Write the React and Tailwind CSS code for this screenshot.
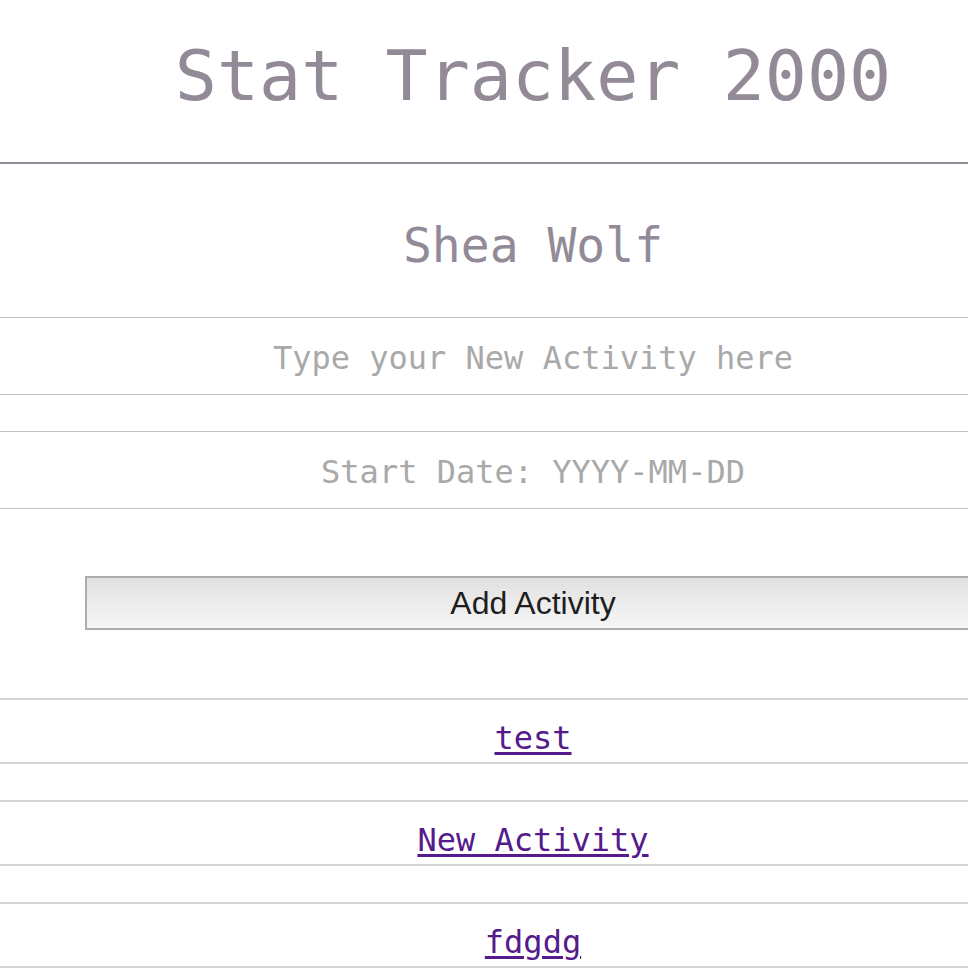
import React from 'react';

const mono = "font-['DejaVu_Sans_Mono','Liberation_Mono',monospace]";

const activities = ['test', 'New Activity', 'fdgdg'];

export default function App() {
    return (
        <div className="w-full overflow-hidden bg-white">
            <div className={`w-[1066px] ${mono}`}>
                {/* Header */}
                <header className="h-[164px] pt-[41px] border-b-2 border-[#928a97] text-center">
                    <h1 className="text-[70px] leading-none text-[#928a97]">Stat Tracker 2000</h1>
                </header>

                {/* User */}
                <h2 className="pt-[57px] text-[48px] leading-none text-center text-[#928a97]">Shea Wolf</h2>

                {/* Form */}
                <form className="mt-[48px]" onSubmit={(e) => e.preventDefault()}>
                    <input
                        type="text"
                        placeholder="Type your New Activity here"
                        className={`block w-full h-[78px] pt-[3px] border-y border-[#c2c2c2] text-center text-[32px] text-[#333] placeholder:text-[#a9a9a9] outline-none ${mono}`}
                    />
                    <input
                        type="text"
                        placeholder="Start Date: YYYY-MM-DD"
                        className={`block w-full h-[78px] mt-[36px] pt-[3px] border-y border-[#c2c2c2] text-center text-[32px] text-[#333] placeholder:text-[#a9a9a9] outline-none ${mono}`}
                    />
                    <button
                        type="submit"
                        className="block mx-auto mt-[67px] w-[896px] h-[54px] border-2 border-[#adadad] bg-gradient-to-b from-[#e1e1e1] to-[#f6f6f6] text-[32px] leading-none text-[#1e1e1e] font-['Liberation_Sans',Arial,sans-serif]"
                    >
                        Add Activity
                    </button>
                </form>

                {/* Activity list */}
                <ul className="mt-[68px] flex flex-col gap-[36px]">
                    {activities.map((name) => (
                        <li key={name} className="h-[66px] pt-[14px] border-y-2 border-[#d3d3d3] flex items-center justify-center">
                            <a href="#" className="text-[32px] leading-none text-[#551a8b] underline underline-offset-[3px]">
                                {name}
                            </a>
                        </li>
                    ))}
                </ul>
            </div>
        </div>
    );
}
